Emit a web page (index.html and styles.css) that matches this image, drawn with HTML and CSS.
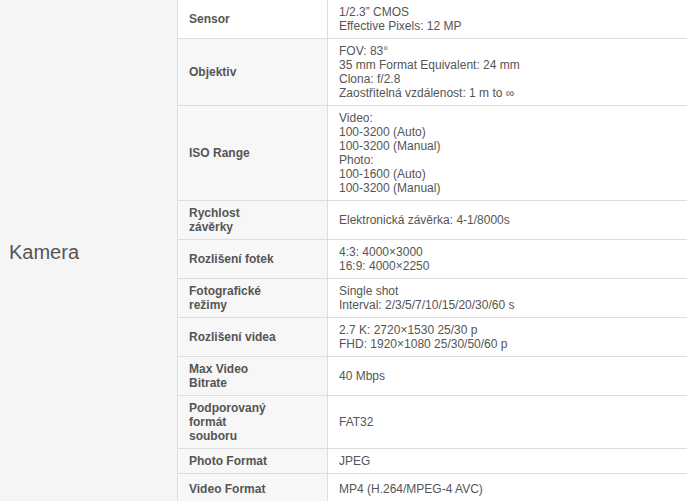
FILE: index.html
```html
<!DOCTYPE html>
<html lang="cs">
<head>
<meta charset="utf-8">
<title>Kamera</title>
<link rel="stylesheet" href="styles.css">
</head>
<body>
<div class="spec">
  <div class="group">Kamera</div>
  <div class="rows">
    <div class="row first"><div class="label"><span>Sensor</span></div><div class="value">1/2.3” CMOS<br>Effective Pixels: 12 MP</div></div>
    <div class="row"><div class="label"><span>Objektiv</span></div><div class="value">FOV: 83°<br>35 mm Format Equivalent: 24 mm<br>Clona: f/2.8<br>Zaostřitelná vzdálenost: 1 m to ∞</div></div>
    <div class="row"><div class="label"><span>ISO Range</span></div><div class="value">Video:<br>100-3200 (Auto)<br>100-3200 (Manual)<br>Photo:<br>100-1600 (Auto)<br>100-3200 (Manual)</div></div>
    <div class="row"><div class="label"><span>Rychlost závěrky</span></div><div class="value">Elektronická závěrka: 4-1/8000s</div></div>
    <div class="row"><div class="label"><span>Rozlišení fotek</span></div><div class="value">4:3: 4000×3000<br>16:9: 4000×2250</div></div>
    <div class="row"><div class="label"><span>Fotografické režimy</span></div><div class="value">Single shot<br>Interval: 2/3/5/7/10/15/20/30/60 s</div></div>
    <div class="row"><div class="label"><span>Rozlišení videa</span></div><div class="value">2.7 K: 2720×1530 25/30 p<br>FHD: 1920×1080 25/30/50/60 p</div></div>
    <div class="row"><div class="label"><span>Max Video Bitrate</span></div><div class="value">40 Mbps</div></div>
    <div class="row"><div class="label"><span class="narrow">Podporovaný formát souboru</span></div><div class="value">FAT32</div></div>
    <div class="row"><div class="label"><span>Photo Format</span></div><div class="value">JPEG</div></div>
    <div class="row last"><div class="label"><span>Video Format</span></div><div class="value">MP4 (H.264/MPEG-4 AVC)</div></div>
  </div>
</div>
</body>
</html>
```
FILE: styles.css
```css
html, body {
  margin: 0;
  padding: 0;
  background: #ffffff;
}
body {
  font-family: "Liberation Sans", Arial, Helvetica, sans-serif;
  color: #555555;
}
.spec {
  display: flex;
  width: 687px;
}
.group {
  width: 178px;
  flex: 0 0 178px;
  box-sizing: border-box;
  background: #f5f5f5;
  border-right: 1px solid #dddddd;
  display: flex;
  align-items: center;
  padding-left: 9px;
  font-size: 20px;
  color: #555555;
}
.rows {
  flex: 1;
  display: flex;
  flex-direction: column;
}
.row {
  display: grid;
  grid-template-columns: 150px 1fr;
  border-bottom: 1px solid #dddddd;
  font-size: 12px;
  line-height: 14px;
}
.label {
  background: #f7f7f7;
  border-right: 1px solid #dddddd;
  padding: 5px 10px 5px 11px;
  font-weight: bold;
  display: flex;
  align-items: center;
  color: #555555;
}
.label span {
  max-width: 89px;
}
.label span.narrow {
  max-width: 80px;
}
.row.first .label {
  background: #ffffff;
}
.value {
  padding: 5px 10px 5px 11px;
  align-self: center;
  color: #555555;
}
.row.last {
  border-bottom: none;
}
.row.last .label,
.row.last .value {
  padding-top: 8px;
  padding-bottom: 8px;
}
```
